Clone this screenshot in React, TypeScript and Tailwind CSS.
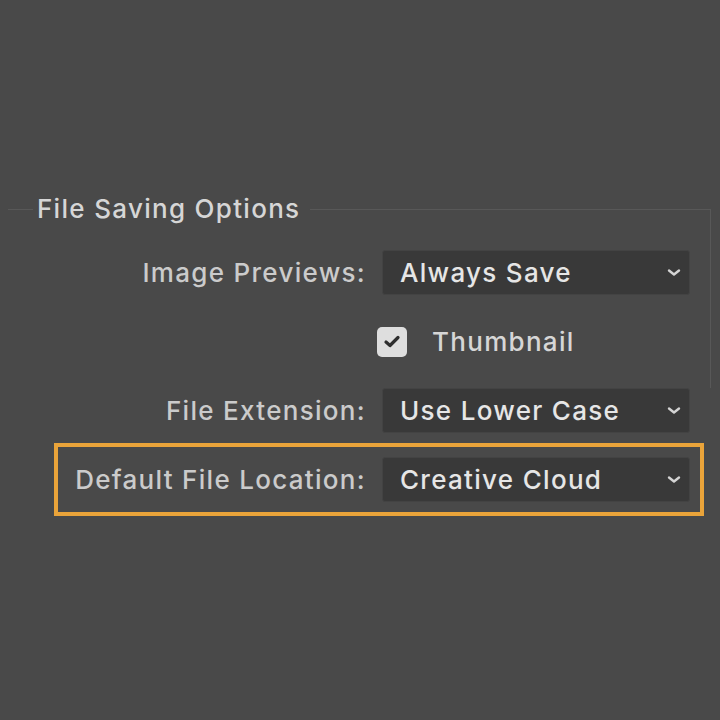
import React from 'react';

interface SelectProps {
    value: string;
}

function Chevron() {
    return (
        <svg width="14" height="9" viewBox="0 0 14 9" fill="none" className="shrink-0">
            <path d="M2 2.5 L7 6.5 L12 2.5" stroke="#d4d4d4" strokeWidth="2.4" strokeLinecap="round" strokeLinejoin="round" />
        </svg>
    );
}

function Select({ value }: SelectProps) {
    return (
        <div className="w-[308px] h-[45px] flex items-center justify-between pl-[17px] pr-[8px] bg-[#393939] border border-[#434343] rounded-[3px]">
            <span className="text-[26px] font-medium tracking-[0.05em] text-[#e6e6e6] whitespace-nowrap">{value}</span>
            <Chevron />
        </div>
    );
}

function Row({ label, value }: { label: string; value: string }) {
    return (
        <div className="flex items-center gap-[16px]">
            <span className="w-[308px] text-right text-[26px] font-medium tracking-[0.05em] text-[#cbcbcb] whitespace-nowrap">{label}</span>
            <Select value={value} />
        </div>
    );
}

export default function App() {
    return (
        <div
            className="w-[720px] h-[720px] bg-[#494949] pt-[194px] overflow-hidden"
            style={{ fontFamily: 'Inter, "Liberation Sans", sans-serif' }}
        >
            {/* Group box */}
            <fieldset className="ml-[8px] w-[703px] border-t border-r border-[#585858]">
                <legend className="ml-[25px] pl-[4px] pr-[10px] text-[26px] font-medium tracking-[0.05em] leading-[30px] text-[#d6d6d6]">
                    File Saving Options
                </legend>
                <div className="ml-[50px] mt-[26px]">
                    <Row label="Image Previews:" value="Always Save" />
                    <div className="h-[93px] flex items-center pl-[319px]">
                        <div className="w-[30px] h-[30px] rounded-[5px] bg-[#dedede] flex items-center justify-center">
                            <svg width="18" height="15" viewBox="0 0 18 15" fill="none">
                                <path d="M3 8 L7 11.5 L15 3.5" stroke="#2e2e2e" strokeWidth="3.2" strokeLinecap="round" strokeLinejoin="round" />
                            </svg>
                        </div>
                        <span className="ml-[25px] text-[26px] font-medium tracking-[0.05em] text-[#d6d6d6]">Thumbnail</span>
                    </div>
                </div>
            </fieldset>

            <div className="ml-[58px]">
                <Row label="File Extension:" value="Use Lower Case" />
            </div>

            {/* Highlighted row */}
            <div className="ml-[54px] mt-[10px] w-[650px] border-4 border-[#eaa43a] py-[10px]">
                <Row label="Default File Location:" value="Creative Cloud" />
            </div>
        </div>
    );
}
